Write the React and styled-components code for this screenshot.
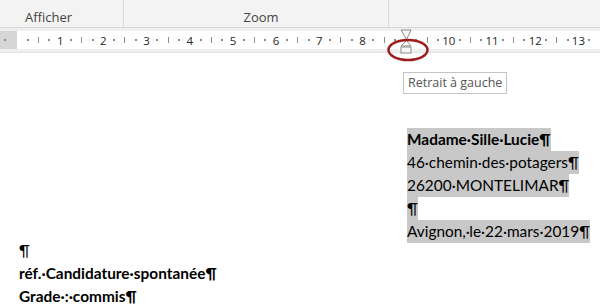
import styled, { createGlobalStyle } from 'styled-components'

const GlobalStyle = createGlobalStyle`
  html, body {
    margin: 0;
    padding: 0;
    background: #ffffff;
  }
  body {
    width: 600px;
    height: 308px;
    overflow: hidden;
  }
`

const Page = styled.div`
  position: relative;
  width: 600px;
  height: 308px;
  overflow: hidden;
  background: #ffffff;
`

// ruban du haut
const Ribbon = styled.div`
  display: flex;
  height: 27px;
  background: #f3f3f3;
  border-bottom: 1px solid #d8d8d8;
`

const Group = styled.div`
  display: flex;
  align-items: flex-end;
  justify-content: ${props => props.$center ? 'center' : 'flex-start'};
  width: ${props => props.$width ? props.$width + 'px' : 'auto'};
  flex: ${props => props.$width ? 'none' : '1'};
  padding-left: ${props => props.$pad || 0}px;
  padding-bottom: 0;
  box-sizing: border-box;
  border-right: ${props => props.$last ? 'none' : '1px solid #dadada'};
`

const GroupLabel = styled.span`
  font-family: "Open Sans", "Liberation Sans", sans-serif;
  font-size: 13px;
  line-height: 20px;
  color: #444444;
`

// bande de la règle
const RulerStrip = styled.div`
  background: #efefef;
  padding: 3px 0 3px;
  border-bottom: 1px solid #e4e4e4;
`

const Ruler = styled.div`
  display: flex;
  height: 18px;
  background: #ffffff;
`

const RulerMargin = styled.div`
  display: flex;
  align-items: center;
  width: 17px;
  flex: none;
  background: #d6d6d6;
`

const RulerTrack = styled.div`
  display: flex;
  align-items: center;
  padding-left: 5.4px;
  overflow: hidden;
  flex: 1;
`

const Slot = styled.div`
  display: flex;
  align-items: center;
  justify-content: center;
  width: 10.8px;
  flex: none;
  height: 18px;
`

const Dot = styled.span`
  width: 2px;
  height: 1.5px;
  background: #8a8a8a;
`

const Tick = styled.span`
  width: 1px;
  height: 6px;
  background: #8f8f8f;
`

const RulerNumber = styled.span`
  font-family: "Open Sans", "Liberation Sans", sans-serif;
  font-size: 11.5px;
  color: #262626;
`

// surcouches : marqueur de retrait, cercle rouge, info-bulle
const Overlay = styled.svg`
  position: absolute;
  left: 0;
  top: 0;
  pointer-events: none;
`

const Tooltip = styled.div`
  position: absolute;
  left: 403px;
  top: 72px;
  padding: 1px 4px 2px;
  border: 1px solid #c4c4c4;
  background: #ffffff;
  font-family: "Open Sans", "Liberation Sans", sans-serif;
  font-size: 12.5px;
  color: #555555;
  white-space: nowrap;
`

// document
const Doc = styled.div`
  display: flex;
  flex-direction: column;
  font-family: Lato, "Liberation Sans", sans-serif;
  font-size: 15.4px;
  color: #000000;
`

const Block = styled.div`
  display: flex;
  flex-direction: column;
  align-items: flex-start;
  margin-left: ${props => props.$left}px;
  margin-top: ${props => props.$top}px;
`

const Line = styled.span`
  display: inline-block;
  height: 23px;
  line-height: 23px;
  white-space: nowrap;
  font-weight: ${props => props.$bold ? 700 : 400};
  background: ${props => props.$mark ? '#c8c8c8' : 'transparent'};
`

const rulerMarks = () => {
  const marks = []
  for (let k = 1; k <= 54; k++) {
    let mark
    if (k % 4 === 0) {
      const n = k / 4
      mark = n === 9 ? null : <RulerNumber>{n}</RulerNumber>
    } else if (k % 4 === 2) {
      mark = <Tick />
    } else {
      mark = <Dot />
    }
    marks.push(<Slot key={k}>{mark}</Slot>)
  }
  return marks
}

const address = [
  { text: 'Madame·Sille·Lucie¶', bold: true },
  { text: '46·chemin·des·potagers¶' },
  { text: '26200·MONTELIMAR¶' },
  { text: '¶' },
  { text: 'Avignon,·le·22·mars·2019¶' },
]

const subject = [
  { text: '¶' },
  { text: 'réf.·Candidature·spontanée¶', bold: true },
  { text: 'Grade·:·commis¶', bold: true },
]

function App () {
  return (
    <Page>
      <GlobalStyle />

      <Ribbon>
        <Group $width={124} $pad={25}>
          <GroupLabel>Afficher</GroupLabel>
        </Group>
        <Group $width={265} $pad={10} $center>
          <GroupLabel>Zoom</GroupLabel>
        </Group>
        <Group $last />
      </Ribbon>

      <RulerStrip>
        <Ruler>
          <RulerMargin>
            <Slot><Dot /></Slot>
          </RulerMargin>
          <RulerTrack>{rulerMarks()}</RulerTrack>
        </Ruler>
      </RulerStrip>

      <Doc>
        <Block $left={407} $top={75}>
          {address.map((l, i) => (
            <Line key={i} $bold={l.bold} $mark>{l.text}</Line>
          ))}
        </Block>
        <Block $left={19} $top={-4}>
          {subject.map((l, i) => (
            <Line key={i} $bold={l.bold}>{l.text}</Line>
          ))}
        </Block>
      </Doc>

      <Overlay width="600" height="70" viewBox="0 0 600 70">
        <path d="M401 30 H411 L406.5 39.5 Z" fill="#f7f7f7" stroke="#8c8c8c" strokeWidth="1" />
        <path d="M406.5 40.5 L411 46 H401 Z" fill="#f7f7f7" stroke="#8c8c8c" strokeWidth="1" />
        <rect x="401" y="47" width="10" height="6" fill="#f7f7f7" stroke="#8c8c8c" strokeWidth="1" />
        <ellipse cx="408" cy="50" rx="19.5" ry="10" fill="none" stroke="#9c1c1c" strokeWidth="2.5" />
      </Overlay>

      <Tooltip>Retrait à gauche</Tooltip>
    </Page>
  )
}

export default App
